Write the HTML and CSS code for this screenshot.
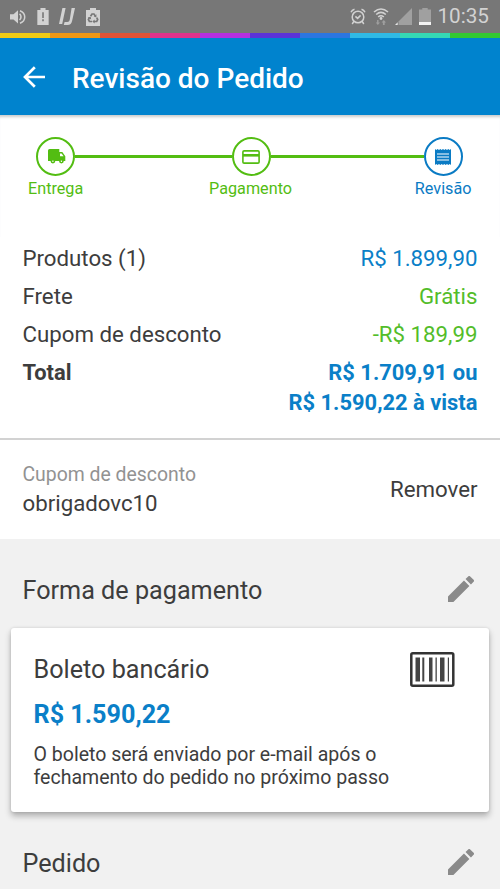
FILE: index.html
```html
<!DOCTYPE html>
<html lang="pt-BR">
<head>
<meta charset="utf-8">
<title>Revisão do Pedido</title>
<link rel="stylesheet" href="styles.css">
</head>
<body>
<div class="status">
  <div class="status-left">
    <svg width="16" height="16" viewBox="0 0 16 16"><path fill="#d2d2d2" d="M0 5.300h3.500L8 1.200v13.200L3.500 10.500H0z"/><path fill="none" stroke="#d2d2d2" stroke-width="1.500" d="M9.600 4.800q2.800 3.200 0 6.200M10 1.800c6.300 2.300 6.300 10.200 0 12.500"/></svg>
    <svg width="12" height="17" viewBox="0 0 12 18"><path fill="#d2d2d2" d="M3.300 0h5.400v2H12v16H0V2h3.300z"/><path stroke="#777" stroke-width="1.700" d="M6 4.500v6M6 12v2"/></svg>
    <svg width="16" height="17" viewBox="0 0 16 17"><path fill="#d2d2d2" d="M3.400 0h3.200L3.200 16H0zM12.600 0H16l-2.800 12.500Q12.400 17 8.500 17H4.800l.8-3h2.700q2 0 2.400-2z"/></svg>
    <svg width="14" height="18" viewBox="0 0 14 18"><path fill="#d2d2d2" d="M4 0h6v2h4v16H0V2h4z"/><path fill="none" stroke="#777" stroke-width="1.700" d="M4.600 8.300L6 6h2l1.200 1.900M10.700 9.600l1 1.900-1 2H8M6 13.500H3.400l-1-2 1-1.800"/><path fill="#777" d="M10.400 6.300v3.200L7.800 8.500zM8.600 11.500v4L6.300 13.500zM1.700 9.600l3-.8.500 2.700z"/></svg>
  </div>
  <div class="status-right">
    <svg width="16" height="17" viewBox="0 0 16 17"><g fill="none" stroke="#d2d2d2" stroke-width="1.500"><circle cx="8" cy="9" r="5.800"/><path d="M1 4.200Q2 1.800 4.500 1.200M15 4.200Q14 1.800 11.500 1.200M4 13.200L2.200 16M12 13.200L13.800 16M5.400 8.400l2.200 2 3-3"/></g></svg>
    <svg width="16" height="17" viewBox="0 0 16 17"><g fill="none" stroke="#d2d2d2" stroke-width="1.600"><path d="M1 4Q8-2 15 4M3.200 6.500Q8 2.300 12.800 6.500M5.200 9Q8 6.500 10.800 9"/></g><circle cx="8" cy="10.500" r="1.400" fill="#d2d2d2"/><path fill="#9f9f9f" d="M5.500 12v2.500H7L4.800 17l-2-2.500h1.300V12zM10.800 12l2.200 2.500h-1.300V17H9.900v-2.500H8.600z"/></svg>
    <svg width="17" height="17" viewBox="0 0 17 17"><path fill="#a0a0a0" d="M17 0v17H3.500v-3.500z"/><path fill="#e8e8e8" d="M0 17l2.700-2.700V17z"/></svg>
    <svg width="12" height="17" viewBox="0 0 12 17"><path fill="#a0a0a0" d="M3.300 0h5.400v1.500H12V14H0V1.500h3.300z"/><path fill="#f3f3f3" d="M0 14h12v3H0z"/></svg>
    <span class="clock">10:35</span>
  </div>
</div>
<div class="stripes"><i class="s1"></i><i class="s2"></i><i class="s3"></i><i class="s4"></i><i class="s5"></i><i class="s6"></i><i class="s7"></i><i class="s8"></i><i class="s9"></i><i class="s10"></i></div>
<header class="bar">
  <svg width="22" height="22" viewBox="0 0 22 22"><path fill="none" stroke="#fff" stroke-width="2.700" d="M22 11H2M11.800 1.200L2 11l9.800 9.800"/></svg>
  <h1>Revisão do Pedido</h1>
</header>
<section class="steps">
  <div class="track">
    <span class="dot"><svg class="truck" width="18" height="15" viewBox="0 0 18 15"><path fill="#53bd12" fill-rule="evenodd" d="M1.500 0h9.800v3h3l3 4.200v4.900h-1.500a2.400 2.400 0 0 1-4.800 0H7.300a2.400 2.400 0 0 1-4.800 0H0V1.500Q0 0 1.500 0zM12 4.400v2.800h3.600l-2-2.800zM4.900 11.500a.7.700 0 1 0 .01 0zM13.400 11.500a.7.700 0 1 0 .01 0z"/></svg></span>
    <span class="line"></span>
    <span class="dot"><svg width="18" height="14" viewBox="0 0 18 14"><rect x=".9" y=".9" width="16.200" height="12.200" rx="1.200" fill="none" stroke="#53bd12" stroke-width="1.600"/><path fill="#53bd12" d="M1 4h16v2.600H1z"/></svg></span>
    <span class="line"></span>
    <span class="dot blue"><svg width="16" height="16" viewBox="0 0 16 16"><path fill="#0a7bc4" d="M0 0l1.300 1 1.300-1L4 1l1.300-1 1.300 1L8 0l1.300 1 1.300-1L12 1l1.300-1 1.300 1L16 0v16l-1.300-1-1.400 1-1.300-1-1.300 1-1.400-1L8 16l-1.300-1-1.400 1L4 15l-1.400 1-1.300-1L0 16z"/><path stroke="#fff" stroke-width="1.200" d="M2 5h12M2 8h12M2 11h12"/></svg></span>
  </div>
  <div class="labels"><span class="l1">Entrega</span><span class="l2">Pagamento</span><span class="l3">Revisão</span></div>
</section>
<section class="summary">
  <div class="row"><span>Produtos (1)</span><span class="cblue">R$ 1.899,90</span></div>
  <div class="row"><span>Frete</span><span class="cgreen">Grátis</span></div>
  <div class="row"><span>Cupom de desconto</span><span class="cgreen">-R$ 189,99</span></div>
  <div class="row total"><span>Total</span><span class="cblue">R$ 1.709,91 ou<br>R$ 1.590,22 à vista</span></div>
</section>
<section class="coupon">
  <div><div class="hint">Cupom de desconto</div><div class="code">obrigadovc10</div></div>
  <span class="remove">Remover</span>
</section>
<div class="heading"><h2>Forma de pagamento</h2><svg class="pen" width="26" height="26" viewBox="3 3 18 18"><path fill="#8a8a8a" d="M3 17.250V21h3.750L17.810 9.940l-3.750-3.750L3 17.250zM20.710 7.040a1 1 0 0 0 0-1.410l-2.340-2.340a1 1 0 0 0-1.410 0l-1.830 1.830 3.750 3.750 1.830-1.830z"/></svg></div>
<section class="card">
  <div class="card-top"><span class="method">Boleto bancário</span>
    <svg width="45" height="35" viewBox="0 0 45 35"><rect x="1.300" y="1.300" width="42" height="32.400" rx="1.500" fill="none" stroke="#333" stroke-width="2.500"/><path fill="#444" d="M5.500 5.500H10v24H5.500zM12.300 5.500h2v24h-2zM19 5.500h3.500v24H19zM25.500 5.500h1.300v24h-1.300zM30 5.500h4.500v24H30zM37.800 5.500h1.200v24h-1.200z"/></svg>
  </div>
  <div class="price">R$ 1.590,22</div>
  <p>O boleto será enviado por e-mail após o<br>fechamento do pedido no próximo passo</p>
</section>
<div class="heading second"><h2>Pedido</h2><svg class="pen" width="26" height="26" viewBox="3 3 18 18"><path fill="#8a8a8a" d="M3 17.250V21h3.750L17.810 9.940l-3.750-3.750L3 17.250zM20.710 7.040a1 1 0 0 0 0-1.410l-2.340-2.340a1 1 0 0 0-1.410 0l-1.830 1.830 3.750 3.750 1.830-1.830z"/></svg></div>
</body>
</html>
```
FILE: styles.css
```css
* { box-sizing: border-box; }
html, body { margin: 0; height: 889px; overflow: hidden; }
body { font-family: Roboto, sans-serif; background: #f1f1f1; color: #3d3d3d; }
h1, h2, p { margin: 0; font-weight: 400; }
svg { display: block; flex: none; }
.status { height: 33px; background: #777; display: flex; justify-content: space-between; padding: 0 11px 0 10px; }
.status-left, .status-right { display: flex; align-items: center; }
.status-left { gap: 10.500px; }
.status-right { gap: 6.500px; }
.clock { font-size: 20.700px; color: #d2d2d2; line-height: 33px; }
.stripes { display: flex; height: 5px; background: #0083ce; }
.stripes i { flex: 1; height: 4.500px; }
.s1 { background: #f0cb15; }
.s2 { background: #ee9715; }
.s3 { background: #e05336; }
.s4 { background: #e0338c; }
.s5 { background: #b530e0; }
.s6 { background: #5b34d8; }
.s7 { background: #2c76e0; }
.s8 { background: #30b9e5; }
.s9 { background: #35d9b5; }
.s10 { background: #32c832; }
.bar { height: 77px; background: #0083ce; color: #fff; display: flex; align-items: center; padding-left: 23px; gap: 27px; }
.bar h1 { font-size: 28px; font-weight: 500; line-height: 40px; padding-top: 4px; }
.steps { background: #fff; height: 122px; padding: 22px 37.500px 0 36px; box-shadow: inset 0 4px 3px -2px #c8cbcd; }
.track { display: flex; align-items: center; }
.dot { width: 39px; height: 39px; border: 2px solid #53bd12; border-radius: 50%; display: flex; align-items: center; justify-content: center; flex: none; }
.truck { margin-left: 2px; }
.blue { border-color: #0a7bc4; }
.line { height: 3px; background: #53bd12; flex: 157px 1 1; }
.line + .dot + .line { flex-basis: 153px; }
.labels { display: flex; justify-content: space-between; margin: 2px -9px 0 -8px; font-size: 16.200px; line-height: 21px; color: #53bd12; }
.l2 { padding-left: 3px; }
.l3 { color: #0a7bc4; }
.summary { background: #fff; height: 203px; padding: 1.500px 22.500px 0; border-bottom: 2px solid #d2d2d2; font-size: 22.250px; line-height: 38.200px; }
.row { display: flex; justify-content: space-between; text-align: right; }
.cblue { color: #0a7fc8; }
.cgreen { color: #53bd2a; }
.total { font-size: 21.900px; font-weight: 700; line-height: 30px; padding-top: 5px; }
.coupon { background: #fff; height: 99px; padding: 0 22.500px 2px; display: flex; align-items: center; justify-content: space-between; font-size: 22.250px; }
.hint { font-size: 19.400px; color: #929292; line-height: 28px; padding-top: 1px; }
.code { line-height: 28px; }
.heading { height: 89px; padding: 11px 26px 0 22.500px; display: flex; align-items: center; justify-content: space-between; }
.heading h2 { font-size: 25.200px; line-height: 30px; padding-top: 3px; }
.card { margin: 0 11px; height: 184px; background: #fff; border-radius: 3px; box-shadow: 0 4px 6px rgba(0,0,0,.28), 0 0 3px rgba(0,0,0,.12); padding: 24px 22.500px 0; }
.card-top { display: flex; justify-content: space-between; height: 46px; padding-right: 12px; }
.method { font-size: 25.200px; line-height: 35px; }
.price { font-size: 25.200px; font-weight: 700; line-height: 33px; color: #0a7fc8; }
.card p { font-size: 19.550px; line-height: 23px; padding-top: 12px; }
.second { height: 77px; padding-top: 22px; }
.second h2 { padding-top: 5px; }
```
